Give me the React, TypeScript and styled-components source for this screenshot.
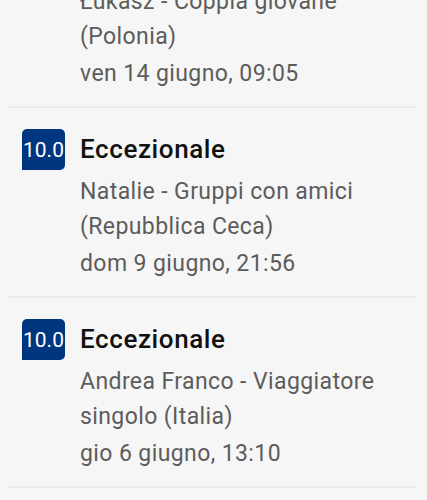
import React from 'react';
import styled, { createGlobalStyle } from 'styled-components';

const GlobalStyle = createGlobalStyle`
  html, body {
    margin: 0;
    padding: 0;
    background: #f6f6f6;
  }
  body {
    font-family: Roboto, "Noto Sans", "Liberation Sans", sans-serif;
    overflow: hidden;
  }
`;

const Page = styled.div`
  width: 427px;
  height: 500px;
  overflow: hidden;
  background: #f6f6f6;
`;

// the list is scrolled, first review sits partly above the view
const ReviewList = styled.div`
  margin-top: -82px;
  display: flex;
  flex-direction: column;
`;

const ReviewItem = styled.div`
  display: flex;
  align-items: flex-start;
  gap: 15px;
  height: 190px;
  box-sizing: border-box;
  padding: 21px 0 17px 14px;
  margin: 0 11px 0 8px;
  border-bottom: 2px solid #ececec;
`;

const ScoreBadge = styled.div`
  flex: none;
  width: 43px;
  height: 41px;
  background: #003580;
  color: #ffffff;
  border-radius: 5px 5px 5px 0;
  display: flex;
  align-items: center;
  justify-content: center;
  font-size: 21px;
`;

const ReviewBody = styled.div`
  display: flex;
  flex-direction: column;
  min-width: 0;
`;

const Title = styled.div`
  font-size: 26px;
  font-weight: 500;
  letter-spacing: 0.6px;
  line-height: 41px;
  color: #111111;
`;

const Author = styled.div`
  font-size: 23px;
  letter-spacing: 0.4px;
  line-height: 35px;
  color: #5c5c5c;
  margin-top: 4px;
`;

const DateText = styled.div`
  font-size: 23px;
  letter-spacing: 0.4px;
  line-height: 35px;
  color: #5c5c5c;
  margin-top: 2px;
`;

interface Review {
  score: string;
  label: string;
  author: string;
  when: string;
}

const reviews: Review[] = [
  {
    score: '10.0',
    label: 'Eccezionale',
    author: 'Łukasz - Coppia giovane (Polonia)',
    when: 'ven 14 giugno, 09:05',
  },
  {
    score: '10.0',
    label: 'Eccezionale',
    author: 'Natalie - Gruppi con amici (Repubblica Ceca)',
    when: 'dom 9 giugno, 21:56',
  },
  {
    score: '10.0',
    label: 'Eccezionale',
    author: 'Andrea Franco - Viaggiatore singolo (Italia)',
    when: 'gio 6 giugno, 13:10',
  },
];

const App: React.FC = () => {
  return (
    <Page>
      <GlobalStyle />
      <ReviewList>
        {reviews.map((r, i) => (
          <ReviewItem key={i}>
            <ScoreBadge>{r.score}</ScoreBadge>
            <ReviewBody>
              <Title>{r.label}</Title>
              <Author>{r.author}</Author>
              <DateText>{r.when}</DateText>
            </ReviewBody>
          </ReviewItem>
        ))}
      </ReviewList>
    </Page>
  );
};

export default App;
